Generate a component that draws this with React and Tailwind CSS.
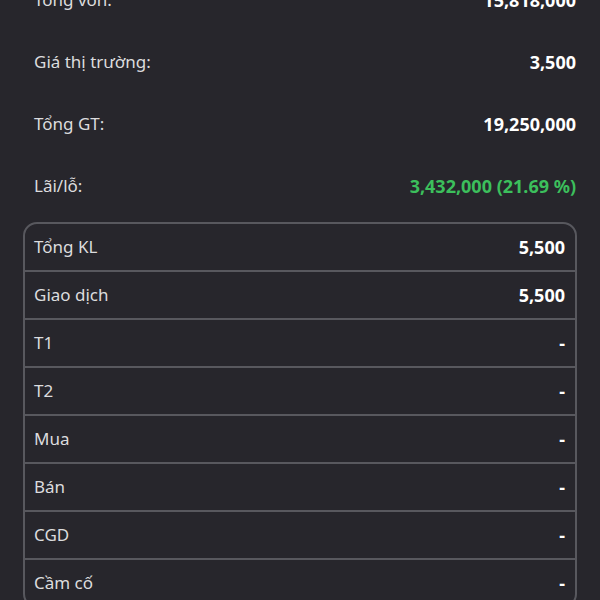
const summary = [
  { label: "Tổng vốn:", value: "15,818,000" },
  { label: "Giá thị trường:", value: "3,500" },
  { label: "Tổng GT:", value: "19,250,000" },
  { label: "Lãi/lỗ:", value: "3,432,000 (21.69 %)", green: true },
];

const details = [
  { label: "Tổng KL", value: "5,500" },
  { label: "Giao dịch", value: "5,500" },
  { label: "T1", value: "-" },
  { label: "T2", value: "-" },
  { label: "Mua", value: "-" },
  { label: "Bán", value: "-" },
  { label: "CGD", value: "-" },
  { label: "Cầm cố", value: "-" },
];

export default function App() {
  return (
    <div
      className="w-[600px] h-[600px] overflow-hidden bg-[#27262c] text-[17px]"
      style={{ fontFamily: '"Noto Sans", sans-serif' }}
    >
      <div className="-mt-[31px] px-[23px]">
        {summary.map((row) => (
          <div
            key={row.label}
            className="h-[62px] flex items-center justify-between pl-[11px] pr-[1px]"
          >
            <span className="text-[#dcdcde]">{row.label}</span>
            <span
              className={
                row.green
                  ? "text-[18px] font-bold text-[#3cbf5c]"
                  : "text-[18px] font-bold text-white"
              }
            >
              {row.value}
            </span>
          </div>
        ))}
        <div className="mt-[5px] border-2 border-[#58585e] rounded-[14px] overflow-hidden">
          {details.map((row, i) => (
            <div
              key={row.label}
              className={
                i === 0
                  ? "h-[46px] flex items-center justify-between pl-[9px] pr-[10px]"
                  : "h-[48px] flex items-center justify-between pl-[9px] pr-[10px] border-t-2 border-[#58585e]"
              }
            >
              <span className="text-[#dcdcde]">{row.label}</span>
              <span className="text-[18px] font-bold text-white">{row.value}</span>
            </div>
          ))}
        </div>
      </div>
    </div>
  );
}
